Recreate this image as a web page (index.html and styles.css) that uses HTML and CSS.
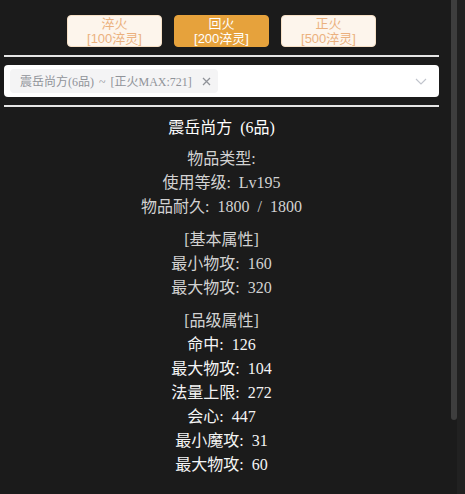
FILE: index.html
```html
<!DOCTYPE html>
<html lang="zh-CN">
<head>
<meta charset="utf-8">
<title>淬火</title>
<link rel="stylesheet" href="styles.css">
</head>
<body>
<div class="screen">
  <main class="panel">
    <div class="btn-row">
      <button class="btn"><span class="btn-line">淬火</span><span class="btn-line">[100淬灵]</span></button>
      <button class="btn btn-active"><span class="btn-line">回火</span><span class="btn-line">[200淬灵]</span></button>
      <button class="btn"><span class="btn-line">正火</span><span class="btn-line">[500淬灵]</span></button>
    </div>
    <hr class="rule">
    <div class="select">
      <span class="tag">
        <span class="tag-text">震岳尚方(6品) ~ [正火MAX:721]</span>
        <svg class="tag-close" width="9" height="9" viewBox="0 0 9 9"><path d="M1 1L8 8M8 1L1 8" stroke="#909399" stroke-width="1.3" fill="none"/></svg>
      </span>
      <svg class="arrow" width="12" height="7" viewBox="0 0 12 7"><path d="M1 1L6 6L11 1" stroke="#c0c4cc" stroke-width="1.1" fill="none"/></svg>
    </div>
    <hr class="rule">
    <section class="info">
      <div class="title">震岳尚方 (6品)</div>
      <div class="group group-first">
        <div class="line">物品类型: </div>
        <div class="line">使用等级: Lv195</div>
        <div class="line">物品耐久: 1800 / 1800</div>
      </div>
      <div class="group">
        <div class="line">[基本属性]</div>
        <div class="line">最小物攻: 160</div>
        <div class="line">最大物攻: 320</div>
      </div>
      <div class="group">
        <div class="line">[品级属性]</div>
        <div class="line bright">命中: 126</div>
        <div class="line bright">最大物攻: 104</div>
        <div class="line bright">法量上限: 272</div>
        <div class="line bright">会心: 447</div>
        <div class="line bright">最小魔攻: 31</div>
        <div class="line bright">最大物攻: 60</div>
      </div>
    </section>
  </main>
  <div class="scrollbar">
    <div class="thumb"></div>
    <div class="track"></div>
  </div>
</div>
</body>
</html>
```
FILE: styles.css
```css
html, body {
  margin: 0;
  padding: 0;
  background: #1b1b1b;
}

.screen {
  display: flex;
  width: 465px;
  height: 494px;
  overflow: hidden;
}

.panel {
  width: 435px;
  margin-left: 4px;
  padding-top: 15px;
}

.btn-row {
  display: flex;
  justify-content: center;
  gap: 12px;
}

.btn {
  width: 95px;
  height: 32px;
  padding: 0;
  margin: 0;
  border: 1px solid #f6e0c6;
  border-radius: 4px;
  background: #fdf5ec;
  color: #ebb17e;
  font-family: "Liberation Sans", "Noto Sans CJK SC", sans-serif;
  font-size: 13px;
  line-height: 15px;
  display: flex;
  flex-direction: column;
  align-items: center;
  justify-content: center;
}

.btn-line {
  display: block;
}

.btn-active {
  background: #e6a23c;
  border-color: #e6a23c;
  color: #ffffff;
}

.rule {
  margin: 8px 0 0;
  border: 0;
  height: 2px;
  background: #e6e6e6;
}

.select {
  margin-top: 8px;
  height: 32px;
  box-sizing: border-box;
  background: #ffffff;
  border-radius: 4px;
  display: flex;
  align-items: center;
  padding: 0 12px 0 6px;
}

.tag {
  display: flex;
  align-items: center;
  height: 24px;
  box-sizing: border-box;
  padding: 0 7px 0 10px;
  background: #f4f4f5;
  border-radius: 4px;
  color: #909399;
  font-family: "Liberation Serif", "Noto Sans CJK SC", serif;
  font-size: 12px;
  word-spacing: 2px;
}

.tag-close {
  margin-left: 10px;
}

.arrow {
  margin-left: auto;
}

.info {
  padding-top: 9px;
  text-align: center;
  font-family: "Liberation Serif", "Noto Sans CJK SC", serif;
  font-size: 16px;
  line-height: 24px;
  word-spacing: 4px;
  color: #d2d2d2;
}

.title {
  color: #ffffff;
}

.group {
  margin-top: 9px;
}

.group-first {
  margin-top: 7px;
}

.bright {
  color: #f4f4f4;
}

.scrollbar {
  margin-left: auto;
  width: 14px;
  display: flex;
  align-items: flex-start;
}

.thumb {
  width: 6px;
  height: 420px;
  background: #3e3e3e;
  border-radius: 0 0 3px 3px;
}

.track {
  width: 8px;
  height: 494px;
  background: #212121;
}
```
